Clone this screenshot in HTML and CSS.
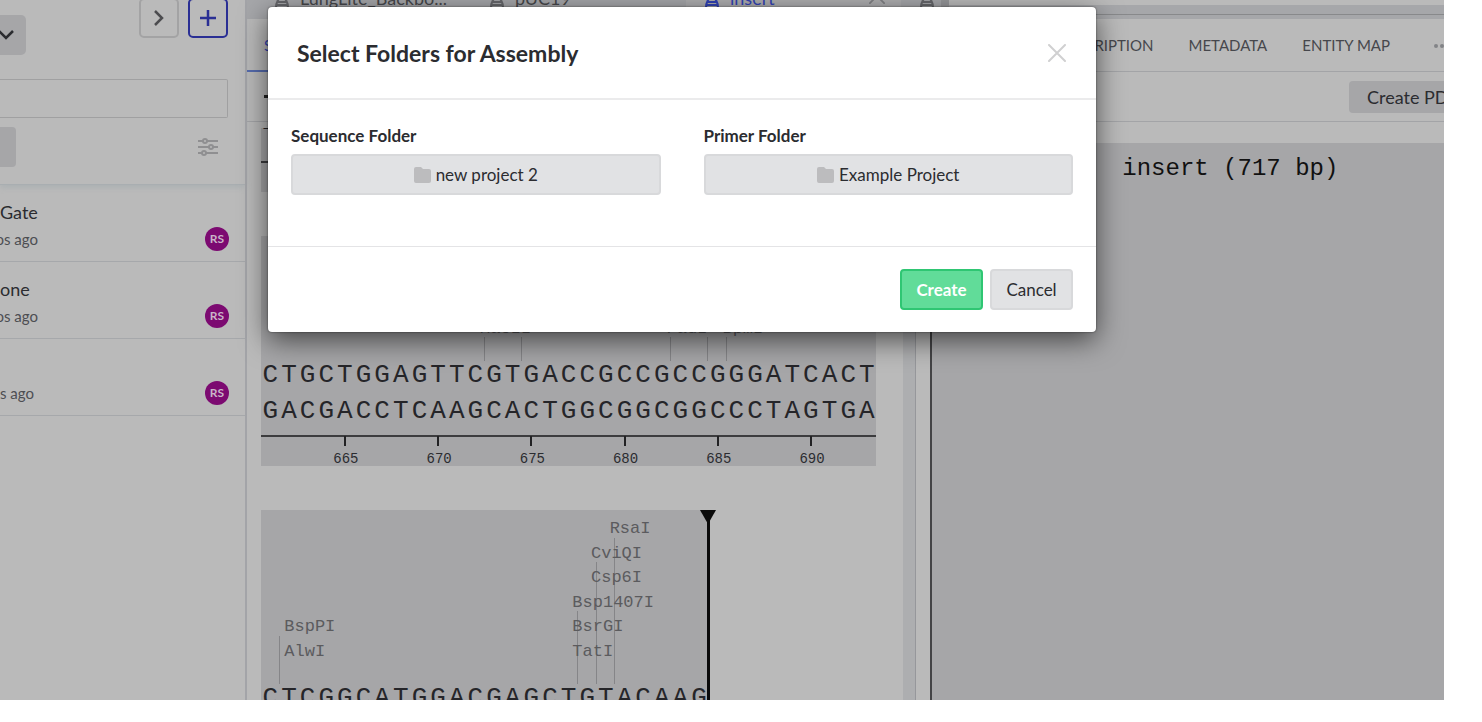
FILE: index.html
```html
<!DOCTYPE html>
<html lang="en">

<head>
    <meta charset="UTF-8">
    <meta name="viewport" content="width=device-width, initial-scale=1.0">
    <title>insert</title>
    <link rel="stylesheet" href="styles.css">
</head>

<body>
    <!-- Icons -->
    <svg class="sprite" aria-hidden="true">
        <symbol id="flask" viewBox="0 0 14 18">
            <path d="M5 1v5Q1 9 1 16q0 1 1 1h10q1 0 1-1 0-7-4-10V1M3 10h8M2 13h10" fill="none" stroke="currentColor" stroke-width="2"/>
        </symbol>
        <symbol id="folder" viewBox="0 0 17 16">
            <path d="M2 0h5l2 2h6q2 0 2 2v10q0 2-2 2H2q-2 0-2-2V2q0-2 2-2z" fill="currentColor"/>
        </symbol>
        <symbol id="cross" viewBox="0 0 18 18">
            <path d="M1 1l16 16M17 1L1 17" fill="none" stroke="currentColor" stroke-width="2" stroke-linecap="round"/>
        </symbol>
    </svg>

    <div class="app">
        <aside class="sidebar">
            <div class="sidebar-head">
                <div class="sidebar-actions">
                    <button class="dropdown" aria-label="Project menu">
                        <svg width="16" height="10" viewBox="0 0 16 10"><path d="M1 1l7 7 7-7" fill="none" stroke="currentColor" stroke-width="2.5"/></svg>
                    </button>
                    <button class="square" aria-label="Expand">
                        <svg width="10" height="16" viewBox="0 0 10 16"><path d="M1 1l7 7-7 7" fill="none" stroke="currentColor" stroke-width="2.5"/></svg>
                    </button>
                    <button class="square add" aria-label="Add">
                        <svg width="18" height="18" viewBox="0 0 18 18"><path d="M9 1v16M1 9h16" fill="none" stroke="currentColor" stroke-width="2.5"/></svg>
                    </button>
                </div>
                <input class="search" type="text" aria-label="Search">
                <div class="filters">
                    <button class="filter" aria-label="Filter"></button>
                    <button class="sliders" aria-label="Settings">
                        <svg width="20" height="20" viewBox="0 0 20 20" fill="#bababa" stroke="currentColor" stroke-width="2">
                            <path d="M0 4h20M0 10h20M0 16h20"/>
                            <circle cx="7" cy="4" r="2"/><circle cx="13" cy="10" r="2"/><circle cx="6" cy="16" r="2"/>
                        </svg>
                    </button>
                </div>
            </div>
            <div class="record">
                <div class="record-name">Gate</div>
                <div class="record-meta"><span class="ago">os ago</span><span class="avatar">RS</span></div>
            </div>
            <div class="record">
                <div class="record-name">one</div>
                <div class="record-meta"><span class="ago">os ago</span><span class="avatar">RS</span></div>
            </div>
            <div class="record">
                <div class="record-name"></div>
                <div class="record-meta"><span class="ago short">s ago</span><span class="avatar">RS</span></div>
            </div>
        </aside>

        <main class="editor">
            <div class="file-tabs">
                <div class="file-tab"><svg width="14" height="18"><use href="#flask"/></svg><span>LungLite_Backbo...</span></div>
                <div class="file-tab"><svg width="14" height="18"><use href="#flask"/></svg><span>pUC19</span></div>
                <div class="file-tab active"><svg width="14" height="18"><use href="#flask"/></svg><span>insert</span><svg class="close-tab" width="16" height="16"><use href="#cross"/></svg></div>
                <div class="file-tab last"><svg width="14" height="18"><use href="#flask"/></svg></div>
                <div class="tab-scroll"></div>
            </div>
            <nav class="view-tabs">
                <a class="view-tab active" href="#">SEQUENCE</a>
                <a class="view-tab push" href="#">DESCRIPTION</a>
                <a class="view-tab" href="#">METADATA</a>
                <a class="view-tab" href="#">ENTITY MAP</a>
                <a class="view-tab more" href="#" aria-label="More">
                    <svg width="16" height="6" viewBox="0 0 16 6" fill="currentColor"><circle cx="2" cy="3" r="2"/><circle cx="8" cy="3" r="2"/><circle cx="14" cy="3" r="2"/></svg>
                </a>
            </nav>
            <div class="toolbar">
                <span class="tool-mark"></span>
                <button class="pdf">Create PDF</button>
            </div>
            <div class="panels">
                <div class="sequence" id="sequence"></div>
                <div class="splitter"></div>
                <div class="map">insert (717 bp)</div>
            </div>
        </main>

        <div class="overlay">
            <div class="dialog" role="dialog" aria-labelledby="dialogTitle">
                <div class="dialog-head">
                    <h2 id="dialogTitle">Select Folders for Assembly</h2>
                    <button class="close" aria-label="Close"><svg width="18" height="18"><use href="#cross"/></svg></button>
                </div>
                <div class="dialog-body">
                    <div class="field">
                        <label for="seqFolder">Sequence Folder</label>
                        <button class="btn" id="seqFolder"><svg width="17" height="16"><use href="#folder"/></svg>new project 2</button>
                    </div>
                    <div class="field">
                        <label for="primerFolder">Primer Folder</label>
                        <button class="btn" id="primerFolder"><svg width="17" height="16"><use href="#folder"/></svg>Example Project</button>
                    </div>
                </div>
                <div class="dialog-foot">
                    <button class="btn create">Create</button>
                    <button class="btn">Cancel</button>
                </div>
            </div>
        </div>
    </div>

    <script src="script.js"></script>
</body>

</html>
```

FILE: styles.css
```css
* {
    box-sizing: border-box;
}

body {
    margin: 0;
    padding: 0 38px 22px 0;
    background: #fff;
    color: #2b2c30;
    font-family: Lato, "Liberation Sans", sans-serif;
    font-size: 17px;
}

button {
    font-family: inherit;
    font-size: inherit;
    color: inherit;
    padding: 0;
    border: none;
    background: none;
    cursor: pointer;
}

svg {
    display: block;
    flex: none;
}

.sprite {
    position: absolute;
    width: 0;
    height: 0;
}

.app {
    position: relative;
    display: flex;
    height: calc(100vh - 22px);
    overflow: hidden;
    background: #bababa;
}

/* Sidebar */
.sidebar {
    flex: none;
    width: 245px;
}

.sidebar-head {
    height: 185px;
    border-bottom: 1px solid #a9aeb1;
    box-shadow: 0 2px 6px #a9afb2;
}

.sidebar-actions {
    display: flex;
    align-items: flex-start;
    height: 79px;
    padding-right: 17px;
}

.dropdown {
    width: 26px;
    height: 40px;
    margin-top: 15px;
    margin-right: auto;
    padding-right: 12px;
    display: flex;
    align-items: center;
    justify-content: flex-end;
    background: #a6a6a8;
    border-radius: 0 5px 5px 0;
}

.square {
    width: 40px;
    height: 40px;
    margin-top: -2px;
    margin-left: 9px;
    display: flex;
    align-items: center;
    justify-content: center;
    border: 2px solid #a3a3a4;
    border-radius: 5px;
    color: #4c4c4f;
}

.square.add {
    border-color: #2a2f94;
    color: #2a2f94;
}

.search {
    display: block;
    width: 228px;
    height: 39px;
    border: 1px solid #a0a0a1;
    border-left: none;
    background: #bababa;
    border-radius: 0 2px 2px 0;
}

.filters {
    display: flex;
    justify-content: space-between;
    align-items: center;
    margin-top: 9px;
    padding-right: 27px;
}

.filter {
    width: 16px;
    height: 40px;
    background: #a6a6a8;
    border-radius: 0 4px 4px 0;
}

.sliders {
    color: #8f8f91;
}

.record {
    height: 77px;
    padding: 15px 16px 0 0;
    border-bottom: 1px solid #a6a8ab;
}

.record-name {
    height: 24px;
    font-size: 18px;
    line-height: 24px;
}

.record-meta {
    display: flex;
    justify-content: space-between;
    align-items: center;
    height: 29px;
}

.ago {
    display: flex;
    justify-content: flex-end;
    width: 38px;
    overflow: hidden;
    font-size: 15px;
    white-space: nowrap;
    color: #4d4e52;
}

.ago.short {
    width: 34px;
}

.avatar {
    width: 24px;
    height: 24px;
    border-radius: 50%;
    background: #7c0a71;
    color: #c9b4c8;
    font-size: 12px;
    font-weight: bold;
    line-height: 24px;
    text-align: center;
}

/* Editor */
.editor {
    flex: 1;
    min-width: 0;
    display: flex;
    flex-direction: column;
    border-left: 2px solid #a3a4a8;
}

.file-tabs {
    display: flex;
    height: 19px;
    padding-left: 9px;
    background: #a6a7aa;
    overflow: hidden;
}

.file-tab {
    flex: none;
    width: 215px;
    height: 19px;
    padding-left: 19px;
    display: flex;
    gap: 11px;
    font-size: 18px;
    color: #66676b;
}

.file-tab svg {
    margin-top: -8px;
}

.file-tab span {
    margin-top: -14px;
    line-height: 24px;
    color: #46474b;
}

.file-tab.active {
    background: #aeaeb0;
    color: #3142b4;
}

.file-tab.active span {
    color: #3142b4;
}

.file-tab .close-tab {
    margin: -12px 16px 0 auto;
    color: #808184;
}

.file-tab.last {
    width: 48px;
    border-right: 8px solid #96979a;
}

.tab-scroll {
    flex: 1;
    height: 15px;
    border-top: 5px solid #bababa;
    border-bottom: 1px solid #88898b;
}

.view-tabs {
    display: flex;
    gap: 35px;
    height: 53px;
    border-bottom: 1px solid #a3a4a7;
}

.view-tab {
    flex: none;
    font-size: 15px;
    line-height: 52px;
    color: #46474c;
    text-decoration: none;
}

.view-tab.active {
    height: 53px;
    padding: 0 17px;
    color: #3142b4;
    border-bottom: 2px solid #556bad;
}

.view-tab.push {
    margin-left: auto;
}

.view-tab.more {
    width: 10px;
    margin-left: 9px;
    padding-top: 24px;
    overflow: hidden;
    color: #828387;
}

.toolbar {
    display: flex;
    justify-content: space-between;
    align-items: center;
    height: 50px;
    padding-left: 17px;
    border-bottom: 1px solid #a3a4a7;
    overflow: hidden;
}

.tool-mark {
    width: 12px;
    height: 3px;
    background: #222;
}

.pdf {
    width: 118px;
    height: 32px;
    margin-right: -23px;
    padding-left: 18px;
    background: #a6a6a8;
    border-radius: 4px;
    font-size: 18px;
    text-align: left;
}

.panels {
    flex: 1;
    min-height: 0;
    display: flex;
}

.sequence {
    flex: 1;
    min-width: 0;
    padding: 6px 27px 0 14px;
    overflow: hidden;
}

.splitter {
    flex: none;
    width: 13px;
    background: #adaeb0;
    border-right: 1px solid #96979b;
}

.map {
    flex: none;
    width: calc(43% - 1px);
    margin: 21px 0 0 14px;
    padding: 10px 0 0 190px;
    border-left: 2px solid #444446;
    background: #a6a6a8;
    font-family: "Liberation Mono", monospace;
    font-size: 24px;
    line-height: 32px;
    color: #111;
}

/* Sequence rows */
.block {
    position: relative;
    margin-bottom: 44px;
    padding-top: 7px;
    background: #a6a6a8;
    font-family: "Liberation Mono", monospace;
}

.block.clipped {
    padding-top: 0;
    overflow: hidden;
}

.block.clipped .strand {
    margin-top: -9px;
}

.enzymes {
    position: relative;
}

.enzyme {
    position: absolute;
    font-size: 17px;
    line-height: 24px;
    color: #5b5b5e;
}

.cut {
    position: absolute;
    bottom: -4px;
    width: 1px;
    margin-left: -1px;
    background: #858588;
}

.strand {
    display: flex;
    height: 36px;
    font-size: 26px;
    line-height: 36px;
    color: #252529;
}

.strand span {
    flex: 1;
    text-align: center;
}

.axis {
    position: relative;
    height: 37px;
}

.axis-line {
    position: absolute;
    top: 6px;
    width: 100%;
    height: 2px;
    background: #3c3c3e;
}

.tick {
    position: absolute;
    top: 7px;
    width: 40px;
    margin-left: -19px;
    padding-top: 13px;
    font-size: 14px;
    line-height: 20px;
    text-align: center;
}

.tick::before {
    content: "";
    position: absolute;
    top: 0;
    left: 18px;
    width: 2px;
    height: 10px;
    background: #222224;
}

.caret {
    position: absolute;
    top: 0;
    right: -2px;
    width: 3px;
    height: 100%;
    background: #0a0a0a;
}

.caret::before {
    content: "";
    position: absolute;
    left: -7px;
    border: 8px solid transparent;
    border-top: 14px solid #0a0a0a;
    border-bottom: none;
}

/* Dialog */
.overlay {
    position: absolute;
    inset: 0;
    display: flex;
    justify-content: center;
    align-items: flex-start;
    padding: 7px 80px 0 0;
}

.dialog {
    width: 828px;
    background: #fff;
    border-radius: 4px;
    box-shadow: 0 0 2px rgba(0, 0, 0, 0.6), 0 8px 28px rgba(0, 0, 0, 0.6);
}

.dialog-head {
    display: flex;
    justify-content: space-between;
    align-items: center;
    height: 93px;
    padding: 0 30px 0 29px;
    border-bottom: 2px solid #ebebec;
}

.dialog-head h2 {
    margin: 0;
    font-size: 23px;
}

.close {
    color: #d0d0d1;
}

.dialog-body {
    display: flex;
    gap: 43px;
    padding: 26px 23px 51px;
}

.field {
    flex: 1;
}

.field label {
    display: block;
    margin-bottom: 8px;
    font-size: 17px;
    font-weight: bold;
    line-height: 20px;
}

.btn {
    display: flex;
    align-items: center;
    justify-content: center;
    gap: 5px;
    height: 41px;
    min-width: 83px;
    background: #e1e2e4;
    border: 2px solid #d8d9db;
    border-radius: 4px;
}

.btn svg {
    color: #bcbcbe;
}

.field .btn {
    width: 100%;
}

.dialog-foot {
    display: flex;
    justify-content: flex-end;
    gap: 7px;
    padding: 22px 23px;
    border-top: 1px solid #e4e4e6;
}

.btn.create {
    background: #61dc99;
    border-color: #2fc673;
    color: #fff;
    font-weight: bold;
}
```

FILE: script.js
```js
const CELLS = 33;
const ROW_HEIGHT = 24.5;

const blocks = [
    { start: 628, strands: ['T'], clipped: true },
    {
        start: 661,
        strands: ['CTGCTGGAGTTCGTGACCGCCGCCGGGATCACT', 'GACGACCTCAAGCACTGGCGGCGGCCCTAGTGA'],
        rows: 4,
        enzymes: [['MaeII', 11.75, 3], ['FauI', 21.75, 3], ['BpmI', 24.75, 3]],
        cuts: [[12, 3], [14, 3], [22, 3], [24, 3], [25, 3]]
    },
    {
        start: 694,
        strands: ['CTCGGCATGGACGAGCTGTACAAG', 'GAGCCGTACCTGCTCGACATGTTC'],
        rows: 6,
        enzymes: [['RsaI', 18.7, 0], ['CviQI', 17.7, 1], ['Csp6I', 17.7, 2], ['Bsp1407I', 16.7, 3],
            ['BsrGI', 16.7, 4], ['TatI', 16.7, 5], ['BspPI', 1.25, 4], ['AlwI', 1.25, 5]],
        cuts: [[1, 4], [17, 3], [18, 1], [19, 0]],
        caret: true
    }
];

function drawBlock(block) {
    const count = block.clipped ? CELLS : block.strands[0].length;
    const left = cell => (cell / count * 100) + '%';
    let html = '';

    if (block.enzymes) {
        const height = block.rows * ROW_HEIGHT + 16;
        html += `<div class="enzymes" style="height: ${height}px">`;
        block.cuts.forEach(([cell, row]) => {
            html += `<div class="cut" style="left: ${left(cell)}; top: ${(row + 1) * ROW_HEIGHT - 4}px"></div>`;
        });
        block.enzymes.forEach(([name, cell, row]) => {
            html += `<div class="enzyme" style="left: ${left(cell)}; top: ${row * ROW_HEIGHT}px">${name}</div>`;
        });
        html += '</div>';
    }

    block.strands.forEach(strand => {
        const letters = strand.padEnd(count, ' ').split('');
        html += '<div class="strand">' + letters.map(l => `<span>${l}</span>`).join('') + '</div>';
    });

    html += '<div class="axis"><div class="axis-line"></div>';
    for (let i = 0; i < count; i++) {
        if ((block.start + i) % 5 === 0 && !block.clipped) {
            html += `<div class="tick" style="left: ${left(i + 0.5)}">${block.start + i}</div>`;
        }
    }
    html += '</div>';
    if (block.caret) {
        html += '<div class="caret"></div>';
    }

    const div = document.createElement('div');
    div.className = block.clipped ? 'block clipped' : 'block';
    div.style.width = (count / CELLS * 100) + '%';
    div.innerHTML = html;
    document.getElementById('sequence').appendChild(div);
}

blocks.forEach(drawBlock);
```
